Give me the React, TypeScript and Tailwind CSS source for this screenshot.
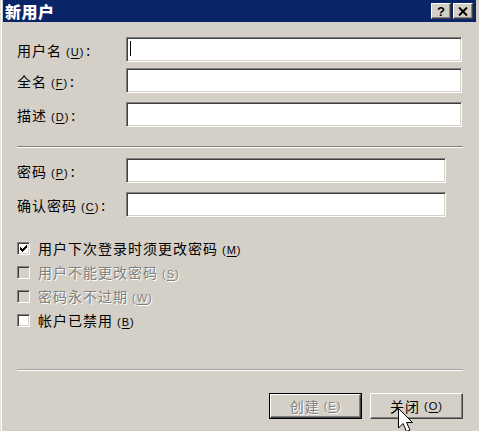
import React from "react";

const cjk = "font-['Noto_Sans_CJK_SC',_'Noto_Sans',_sans-serif]";

function Key({ k }: { k: string }) {
  return (
    <span className="ml-[4px] text-[11px] font-['Liberation_Sans',_sans-serif]">
      (<span className="underline underline-offset-[2px]">{k}</span>)
    </span>
  );
}

function Field({ className, caret }: { className: string; caret?: boolean }) {
  return (
    <div
      className={`relative h-[25px] bg-white border border-t-[#808080] border-l-[#808080] border-b-white border-r-white shadow-[inset_1px_1px_0_#404040,inset_-1px_-1px_0_#d4d0c8] ${className}`}
    >
      {caret && <div className="absolute left-[3px] top-[3px] w-px h-[15px] bg-black" />}
    </div>
  );
}

function Row({ label, k, field, mt }: { label: string; k: string; field: React.ReactNode; mt: string }) {
  return (
    <div className={`flex items-center ${mt}`}>
      <div className="w-[109px] pt-[2px] text-[14px] tracking-[1px] text-black">
        {label}
        <Key k={k} />
        <span className="ml-[2px]">:</span>
      </div>
      {field}
    </div>
  );
}

function Check({ label, k, checked, disabled }: { label: string; k: string; checked?: boolean; disabled?: boolean }) {
  return (
    <div className="flex items-center h-[24px]">
      <div
        className={`w-[13px] h-[13px] flex items-center justify-center border border-t-[#808080] border-l-[#808080] border-b-white border-r-white shadow-[inset_1px_1px_0_#404040,inset_-1px_-1px_0_#d4d0c8] ${
          disabled ? "bg-[#d4d0c8]" : "bg-white"
        }`}
      >
        {checked && (
          <svg width="7" height="7" viewBox="0 0 7 7" shapeRendering="crispEdges">
            <path
              d="M6 0h1v1H6zM5 1h2v1H5zM0 2h1v1H0zM4 2h3v1H4zM0 3h2v1H0zM3 3h3v1H3zM0 4h5v1H0zM1 5h3v1H1zM2 6h1v1H2z"
              fill="#000"
            />
          </svg>
        )}
      </div>
      <div
        className={`ml-[8px] text-[14px] tracking-[1px] ${
          disabled ? "text-[#808080] [text-shadow:1px_1px_0_#fff]" : "text-black"
        }`}
      >
        {label}
        <Key k={k} />
      </div>
    </div>
  );
}

function Separator({ mt, tone }: { mt: string; tone: string }) {
  return <div className={`h-[2px] border-t border-b border-b-white ${tone} ${mt}`} />;
}

function TitleButton({ children }: { children: React.ReactNode }) {
  return (
    <div className="w-[20px] h-[16px] flex items-center justify-center bg-[#d4d0c8] border border-t-white border-l-white border-b-[#404040] border-r-[#404040] shadow-[inset_-1px_-1px_0_#808080]">
      {children}
    </div>
  );
}

export default function App() {
  return (
    <div
      className={`relative w-[479px] h-[431px] overflow-hidden bg-[#d4d0c8] px-[3px] shadow-[inset_1px_0_0_#e4e2dc,inset_2px_0_0_#fff] ${cjk}`}
    >
      {/* Title bar */}
      <div className="h-[22px] bg-[#0a246a] flex items-center justify-between pl-[2px] pr-[3px]">
        <span className="text-white font-black text-[16px] tracking-[0.5px] leading-none">新用户</span>
        <div className="flex gap-[2px]">
          <TitleButton>
            <span className="text-[13px] font-bold leading-none text-black font-['Liberation_Sans',_sans-serif]">?</span>
          </TitleButton>
          <TitleButton>
            <svg width="10" height="9" viewBox="0 0 10 9">
              <path d="M1 0.5 L9 8.5 M9 0.5 L1 8.5" stroke="#000" strokeWidth="2" />
            </svg>
          </TitleButton>
        </div>
      </div>

      <div className="flex flex-col pl-[14px] pr-[13px]">
        <Row label="用户名" k="U" mt="mt-[15px]" field={<Field className="w-[336px]" caret />} />
        <Row label="全名" k="F" mt="mt-[6px]" field={<Field className="w-[336px]" />} />
        <Row label="描述" k="D" mt="mt-[9px]" field={<Field className="w-[336px]" />} />

        <Separator mt="mt-[19px]" tone="border-t-[#808080]" />

        <Row label="密码" k="P" mt="mt-[10px]" field={<Field className="w-[320px]" />} />
        <Row label="确认密码" k="C" mt="mt-[9px]" field={<Field className="w-[320px]" />} />

        <div className="mt-[19px] flex flex-col">
          <Check label="用户下次登录时须更改密码" k="M" checked />
          <Check label="用户不能更改密码" k="S" disabled />
          <Check label="密码永不过期" k="W" disabled />
          <Check label="帐户已禁用" k="B" />
        </div>

        <Separator mt="mt-[37px]" tone="border-t-[#a0a0a0]" />

        <div className="mt-[22px] flex justify-end gap-[8px]">
          <div className="w-[93px] h-[26px] border border-black">
            <div className="w-full h-full flex items-center justify-center border border-t-white border-l-white border-b-[#404040] border-r-[#404040] shadow-[inset_-1px_-1px_0_#808080] text-[14px] tracking-[1px] text-[#808080] [text-shadow:1px_1px_0_#fff]">
              创建
              <Key k="E" />
            </div>
          </div>
          <div className="w-[93px] h-[26px] flex items-center justify-center border border-t-white border-l-white border-b-[#404040] border-r-[#404040] shadow-[inset_-1px_-1px_0_#808080] text-[14px] tracking-[1px] text-black">
            关闭
            <Key k="O" />
          </div>
        </div>
      </div>

      {/* mouse pointer */}
      <svg className="absolute left-[398px] top-[408px]" width="17" height="25" viewBox="0 0 17 25">
        <path d="M0.5 0.5 L0.5 20 L5 15.5 L8.5 23.5 L12 22 L8.5 14.5 L14.5 14.5 Z" fill="#fff" stroke="#000" strokeWidth="1" strokeLinejoin="miter" />
      </svg>
    </div>
  );
}
